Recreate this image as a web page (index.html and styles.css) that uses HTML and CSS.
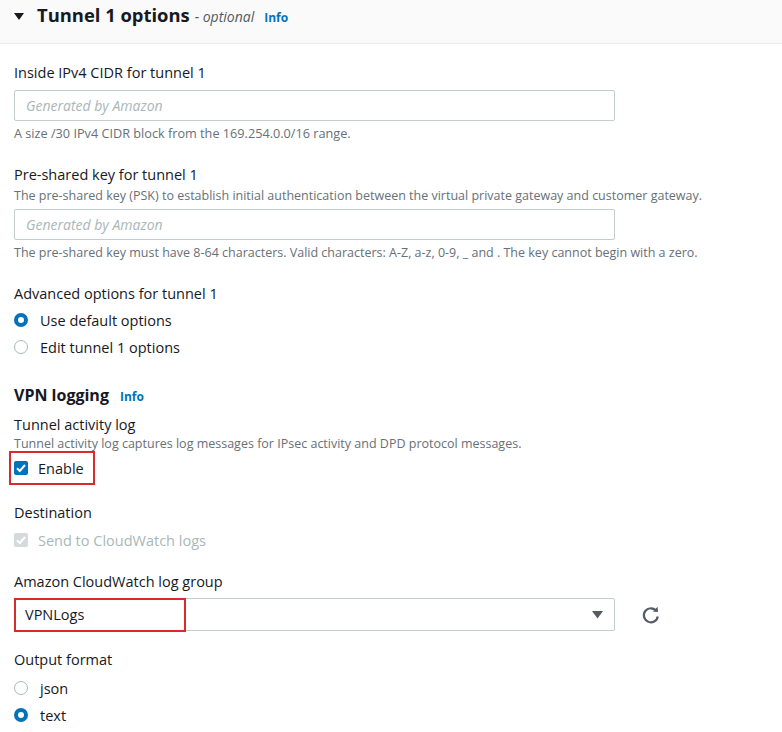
FILE: index.html
```html
<!DOCTYPE html>
<html lang="en">
<head>
    <meta charset="UTF-8">
    <title>Tunnel 1 options</title>
    <link rel="stylesheet" href="styles.css">
</head>
<body>
    <div class="section-header">
        <svg class="caret" width="10" height="8" viewBox="0 0 10 8"><polygon points="0,0 10,0 5,7" fill="#16191f"/></svg>
        <h2 class="title">Tunnel 1 options</h2>
        <span class="optional">- optional</span>
        <a class="info" href="#">Info</a>
    </div>

    <div class="content">
        <div class="field field-cidr">
            <div class="label">Inside IPv4 CIDR for tunnel 1</div>
            <input class="text-input" type="text" placeholder="Generated by Amazon">
            <div class="hint">A size /30 IPv4 CIDR block from the 169.254.0.0/16 range.</div>
        </div>

        <div class="field field-psk">
            <div class="label">Pre-shared key for tunnel 1</div>
            <div class="desc">The pre-shared key (PSK) to establish initial authentication between the virtual private gateway and customer gateway.</div>
            <input class="text-input" type="text" placeholder="Generated by Amazon">
            <div class="hint">The pre-shared key must have 8-64 characters. Valid characters: A-Z, a-z, 0-9, _ and . The key cannot begin with a zero.</div>
        </div>

        <div class="field field-adv">
            <div class="label">Advanced options for tunnel 1</div>
            <div class="option first"><span class="radio checked"></span>Use default options</div>
            <div class="option"><span class="radio"></span>Edit tunnel 1 options</div>
        </div>

        <div class="subheading">
            <span>VPN logging</span>
            <a class="info" href="#">Info</a>
        </div>

        <div class="field field-log">
            <div class="label">Tunnel activity log</div>
            <div class="desc">Tunnel activity log captures log messages for IPsec activity and DPD protocol messages.</div>
            <div class="option highlight-box">
                <span class="checkbox">
                    <svg width="14" height="14" viewBox="0 0 14 14"><polyline points="3,7.2 5.8,10 11,4" fill="none" stroke="#fff" stroke-width="2"/></svg>
                </span>Enable
            </div>
        </div>

        <div class="field field-dest">
            <div class="label">Destination</div>
            <div class="option disabled">
                <span class="checkbox disabled">
                    <svg width="14" height="14" viewBox="0 0 14 14"><polyline points="3,7.2 5.8,10 11,4" fill="none" stroke="#fff" stroke-width="2"/></svg>
                </span>Send to CloudWatch logs
            </div>
        </div>

        <div class="field field-group">
            <div class="label">Amazon CloudWatch log group</div>
            <div class="select-row">
                <div class="select">
                    <span class="select-value">VPNLogs</span>
                    <svg class="select-caret" width="11" height="8" viewBox="0 0 11 8"><polygon points="0,0 11,0 5.5,7.5" fill="#545b64"/></svg>
                    <span class="select-mark"></span>
                </div>
                <svg class="refresh" width="20" height="20" viewBox="0 0 20 20">
                    <path d="M15.6 6.2 A7 7 0 1 0 16.8 11.5" fill="none" stroke="#545b64" stroke-width="2.2"/>
                    <polygon points="11.8,6.4 17,6.9 16.6,1.8" fill="#545b64"/>
                </svg>
            </div>
        </div>

        <div class="field field-format">
            <div class="label">Output format</div>
            <div class="option first"><span class="radio"></span>json</div>
            <div class="option"><span class="radio checked"></span>text</div>
        </div>
    </div>
</body>
</html>
```

FILE: styles.css
```css
body {
    margin: 0;
    font-family: 'Open Sans', 'Noto Sans', sans-serif;
    color: #16191f;
    background-color: #fff;
}
.section-header {
    display: flex;
    align-items: baseline;
    background-color: #fafafa;
    border-bottom: 1px solid #eaeded;
    height: 44px;
    box-sizing: border-box;
    padding: 1px 14px 0 14px;
}
.caret {
    margin-right: 13px;
    position: relative;
    top: -1px;
}
.title {
    margin: 0;
    font-size: 18.4px;
    font-weight: bold;
    line-height: 28px;
}
.optional {
    font-style: italic;
    font-size: 14px;
    color: #545b64;
    margin-left: 5px;
}
.info {
    color: #0073bb;
    font-weight: bold;
    font-size: 12px;
    text-decoration: none;
    margin-left: 10px;
}
.content {
    padding: 0 14px;
}
.label {
    font-size: 14.5px;
    line-height: 20px;
}
.desc,
.hint {
    font-size: 12.5px;
    line-height: 16px;
    color: #687078;
}
.text-input {
    display: block;
    box-sizing: border-box;
    width: 601px;
    height: 31px;
    border: 1px solid #c6cccd;
    border-radius: 2px;
    padding: 0 11px;
    font-family: inherit;
    font-size: 14px;
}
.text-input::placeholder {
    color: #aab7b8;
    font-style: italic;
}
.field-cidr { padding-top: 19px; }
.field-cidr .text-input { margin-top: 7px; }
.field-cidr .hint { margin-top: 4px; font-size: 12.7px; }
.field-psk { padding-top: 24px; }
.field-psk .desc { margin-top: 3px; }
.field-psk .text-input { margin-top: 5px; }
.field-psk .hint { margin-top: 5px; }
.field-adv { padding-top: 23px; }
.option {
    display: flex;
    align-items: center;
    height: 24px;
    font-size: 14.5px;
    margin-top: 3px;
}
.field-adv .option.first { margin-top: 4px; }
.option.disabled {
    color: #aab7b8;
}
.radio {
    box-sizing: border-box;
    width: 14px;
    height: 14px;
    border-radius: 50%;
    border: 1px solid #aab7b8;
    margin-right: 12px;
    background-color: #fff;
}
.radio.checked {
    border: 4px solid #0073bb;
}
.checkbox {
    display: flex;
    width: 14px;
    height: 14px;
    border-radius: 2px;
    background-color: #0073bb;
    margin-right: 10px;
}
.checkbox.disabled {
    background-color: #d5dbdb;
}
.subheading {
    display: flex;
    align-items: baseline;
    padding-top: 25px;
    font-size: 16px;
    font-weight: bold;
    line-height: 22px;
}
.subheading .info {
    margin-left: 11px;
}
.field-log { padding-top: 7px; }
.field-log .desc { margin-top: 1px; }
.highlight-box {
    display: inline-flex;
    height: 30px;
    border: 2px solid #d92b2b;
    padding: 0 9px 0 3px;
    margin: -1px 0 0 -5px;
}
.field-dest { padding-top: 18px; }
.field-dest .option { margin-top: 5px; }
.field-group { padding-top: 20px; }
.select-row {
    display: flex;
    align-items: center;
    margin-top: 6px;
}
.select {
    position: relative;
    box-sizing: border-box;
    width: 601px;
    height: 33px;
    border: 1px solid #c6cccd;
    border-radius: 2px;
    display: flex;
    align-items: center;
    padding: 0 11px 0 10px;
    font-size: 14.5px;
}
.select-value {
    flex: 1;
}
.select-mark {
    position: absolute;
    left: -1px;
    top: -1px;
    width: 172px;
    height: 34px;
    box-sizing: border-box;
    border: 2px solid #d92b2b;
}
.refresh {
    margin-left: 26px;
}
.field-format { padding-top: 19px; }
.field-format .option.first { margin-top: 6px; }
```
